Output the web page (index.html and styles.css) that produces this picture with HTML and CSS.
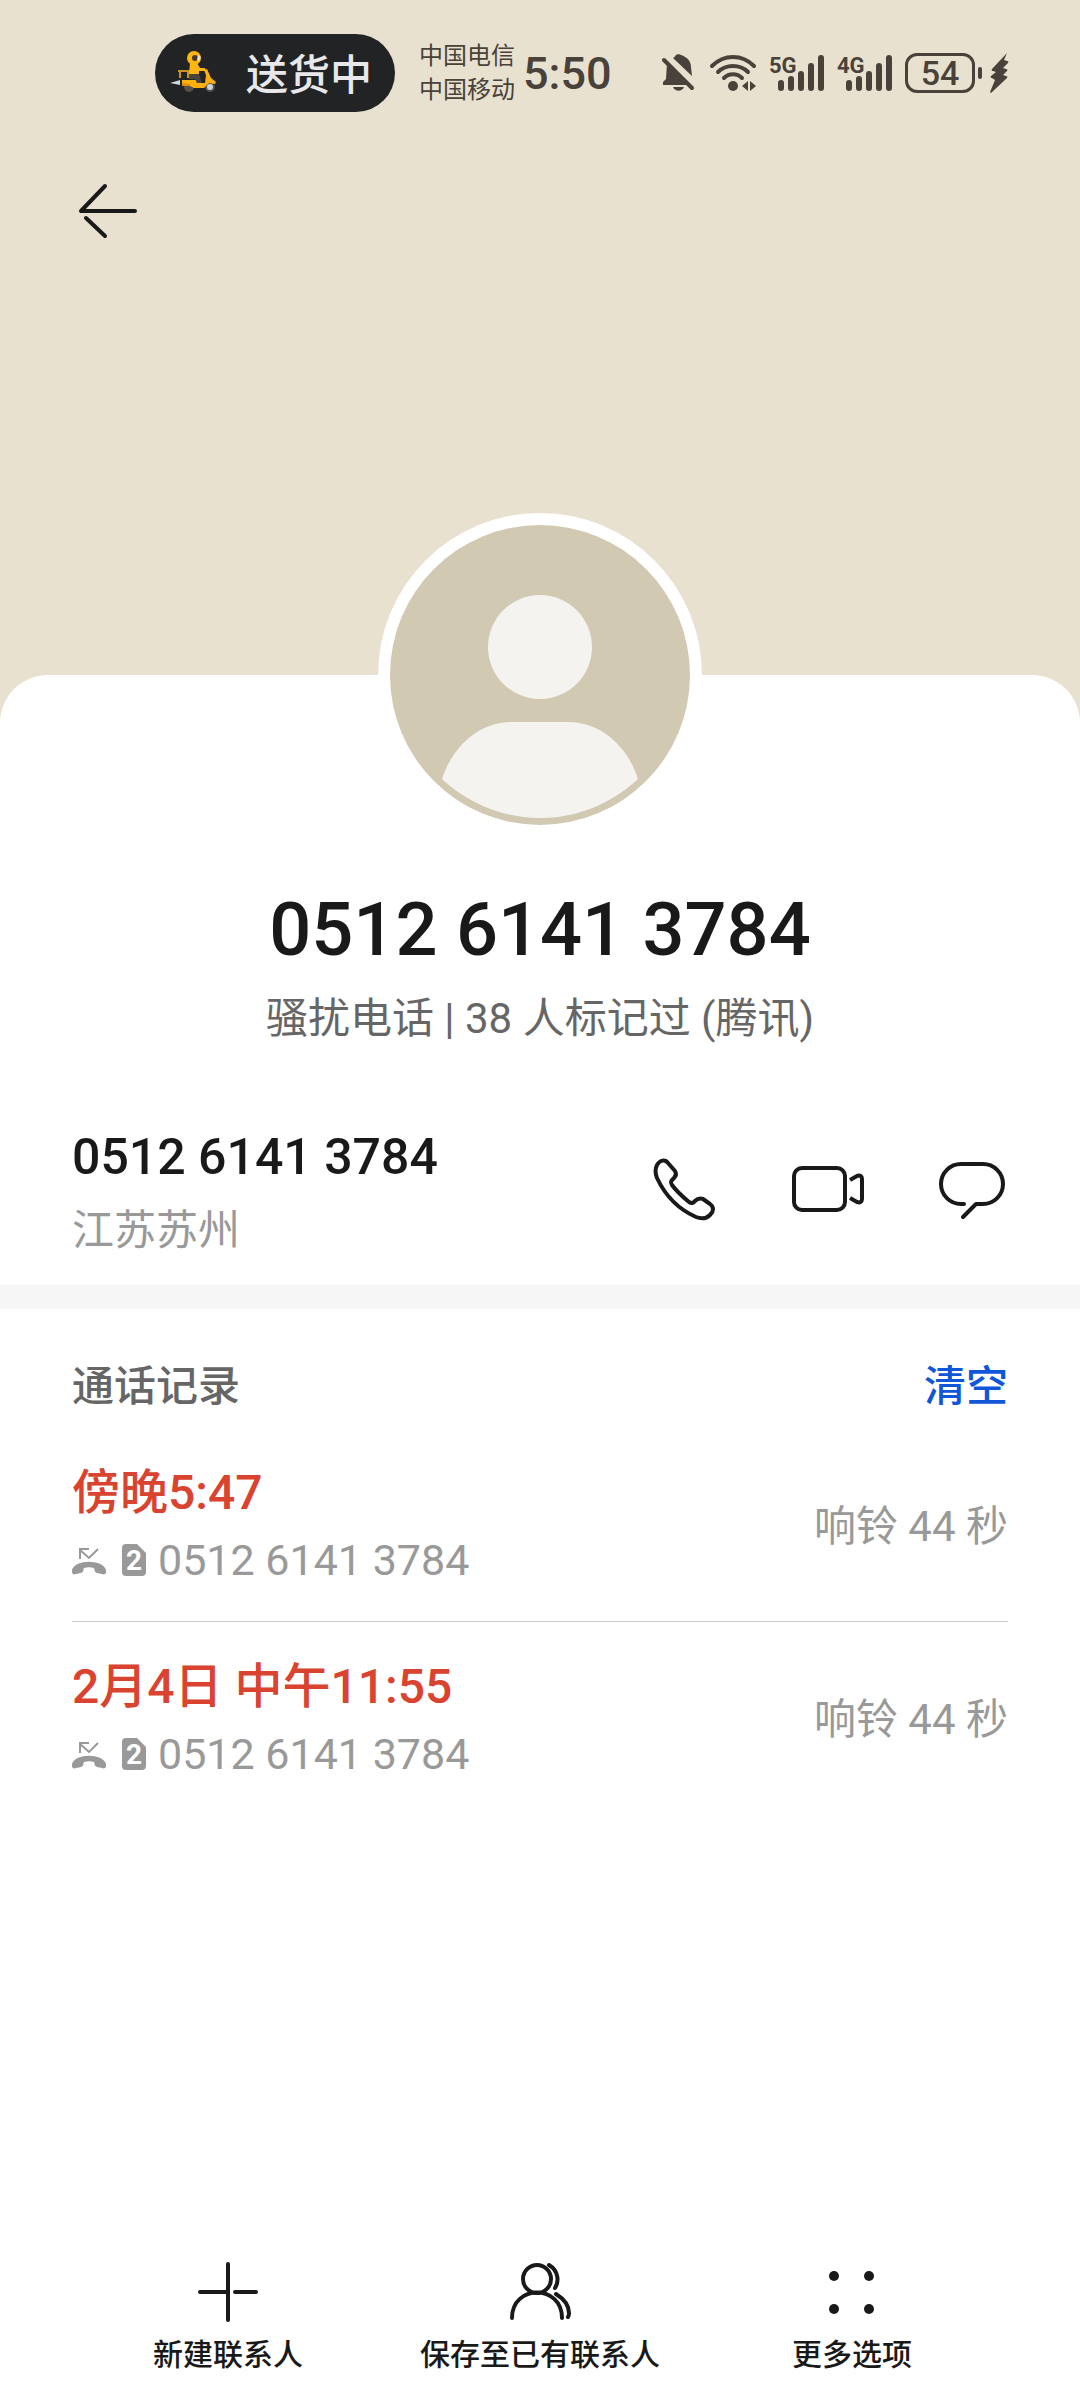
FILE: index.html
```html
<!DOCTYPE html>
<html lang="zh-CN">
<head>
<meta charset="utf-8">
<meta name="viewport" content="width=device-width, initial-scale=1">
<title>0512 6141 3784</title>
<link rel="stylesheet" href="styles.css">
</head>
<body>
<div class="page">
  <header class="hero">
    <div class="status">
      <div class="pill">
        <svg class="scooter" width="50" height="44" viewBox="0 0 50 44" aria-hidden="true">
          <path d="M8 20h12M10 20v7M18 20v7" fill="none" stroke="#c99325" stroke-width="2"/>
          <path d="M0 32l10-3v5z" fill="#cfd6e2"/>
          <circle cx="19" cy="36" r="5" fill="#55504a"/>
          <circle cx="40" cy="36" r="5" fill="#55504a"/>
          <circle cx="40" cy="36" r="3" fill="#cdd3dc"/>
          <path d="M12 29h17l2 3h4l1-8-2-5 3-1 4 9 5 4-1 2-6-1-5 5H24l-6-3h-6z" fill="#fcb010"/>
          <path d="M19 23h10l3 9h-5l-2-4h-6z" fill="#48433f"/>
          <path d="M20 12h7l3 5h5v3h-6v3h-10z" fill="#ffb70f"/>
          <circle cx="24" cy="7" r="7" fill="#ffb70f"/>
          <circle cx="25" cy="7" r="3" fill="#4c3a20"/>
          <path d="M28 4l3 2-2 4-2-1z" fill="#e9e2d8"/>
          <path d="M12 32l8 1-2 2h-6z" fill="#e68c0b"/>
        </svg>
        <span>送货中</span>
      </div>
      <div class="carriers"><span>中国电信</span><span>中国移动</span></div>
      <time class="clock">5:50</time>
      <svg class="bell" width="32" height="38" viewBox="0 0 32 38" aria-label="静音">
        <path d="M11 4C13 3 13 2 14 1c1-1 4-1 5 0 6 2 10 6 10 12l1 9z"/>
        <path d="M5 9l22 22H1v-3l3-3z"/>
        <path d="M2 6l28 28" fill="none" stroke="currentColor" stroke-width="4" stroke-linecap="round"/>
        <path d="M11 33h11c-2 5-9 5-11 0z"/>
      </svg>
      <svg class="wifi" width="48" height="38" viewBox="0 0 48 38" aria-label="无线网络">
        <g fill="none" stroke="currentColor" stroke-width="4" stroke-linecap="round">
          <path d="M3 12C15 0 33 0 45 12"/><path d="M9 18C17 10 31 10 39 18"/><path d="M15 24C20 19 28 19 33 24"/>
        </g>
        <circle cx="24" cy="32" r="5"/>
        <path d="M33 32l6-5v10zM41 27l6 5-6 5z"/>
      </svg>
      <svg class="signal" width="56" height="38" viewBox="0 0 56 38" aria-label="5G 信号">
        <text x="0" y="19">5G</text>
        <path d="M12 29v5M22 25v9M32 20v14M42 12v22M52 4v30"/>
      </svg>
      <svg class="signal" width="56" height="38" viewBox="0 0 56 38" aria-label="4G 信号">
        <text x="0" y="19">4G</text>
        <path d="M12 29v5M22 25v9M32 20v14M42 12v22M52 4v30"/>
      </svg>
      <div class="battery"><span>54</span></div>
      <svg class="bolt" width="18" height="40" viewBox="0 0 18 40" aria-label="充电中">
        <path d="M17 0L2 16q-1 2 1 2l3 1-5 4q-1 2 1 2l3 2-5 12 1 1 16-15q1-2-1-2l-3-1 4-4q1-2-1-2l-3-1 5-5q1-2-1-2l-3-1z"/>
      </svg>
    </div>
    <button class="back" aria-label="返回">
      <svg width="64" height="60" viewBox="0 0 64 60"><path d="M29 5L5 30H59M29 55L10 37" fill="none" stroke="currentColor" stroke-width="4" stroke-linecap="round" stroke-linejoin="round"/></svg>
    </button>
  </header>

  <main class="sheet">
    <svg class="avatar" width="324" height="324" viewBox="0 0 324 324" aria-hidden="true">
      <circle cx="162" cy="162" r="162" fill="#fff"/>
      <circle cx="162" cy="162" r="150" fill="#d2c9b3"/>
      <circle cx="162" cy="134" r="52" fill="#f4f3f0"/>
      <path d="M134 209h56c32 0 59 23 70 57-56 52-140 52-196 0 11-34 38-57 70-57z" fill="#f4f3f0"/>
    </svg>
    <h1 class="title">0512 6141 3784</h1>
    <p class="tag">骚扰电话 | 38 人标记过 (腾讯)</p>

    <section class="contact">
      <div class="contact-text">
        <p class="number">0512 6141 3784</p>
        <p class="region">江苏苏州</p>
      </div>
      <div class="actions">
        <button aria-label="拨打电话">
          <svg width="64" height="64" viewBox="0 0 64 64"><path d="M5 8C8 3 13 2 16 6l7 8c2 3 1 5-1 7-3 3-4 4-2 7 5 7 11 12 17 17 3 2 4 1 6-1 3-3 5-3 8-2l7 5c4 3 4 7 0 11-4 4-9 4-14 2C26 52 13 38 5 21 3 16 3 12 5 8z"/></svg>
        </button>
        <button aria-label="视频通话">
          <svg width="76" height="64" viewBox="0 0 76 64"><rect x="4" y="11" width="51" height="42" rx="8"/><path d="M60 23l7-4c3-1 5 0 5 3v20c0 3-2 4-5 3l-7-4" stroke-linecap="butt"/></svg>
        </button>
        <button aria-label="发送信息">
          <svg width="68" height="64" viewBox="2 0 68 64"><path d="M26 47H23A20 20 0 0 1 23 7H45A20 20 0 0 1 45 47H38L25 60"/></svg>
        </button>
      </div>
    </section>

    <section class="log">
      <div class="log-head"><h2>通话记录</h2><button class="clear">清空</button></div>
      <ul>
        <li>
          <div>
            <p class="when">傍晚5:47</p>
            <p class="from">
              <svg class="missed" width="34" height="32" viewBox="0 0 34 32" aria-label="未接来电"><path d="M8 15V5h9M8 6l9 8 9-9" fill="none" stroke="currentColor" stroke-width="2"/><path d="M0 26c3-11 31-11 34 0v2c0 2-2 3-4 2l-5-1c-3-1-2-3-3-5-3-1-7-1-10 0-1 2 0 4-3 5l-5 1c-2 1-4 0-4-2z"/></svg>
              <svg class="sim" width="24" height="32" viewBox="0 0 24 32" aria-label="卡2"><path d="M4 0h11l9 9v19q0 4-4 4H4q-4 0-4-4V4q0-4 4-4z"/><text x="12" y="26">2</text></svg>
              <span>0512 6141 3784</span>
            </p>
          </div>
          <span class="ring">响铃 44 秒</span>
        </li>
        <li>
          <div>
            <p class="when">2月4日 中午11:55</p>
            <p class="from">
              <svg class="missed" width="34" height="32" viewBox="0 0 34 32" aria-label="未接来电"><path d="M8 15V5h9M8 6l9 8 9-9" fill="none" stroke="currentColor" stroke-width="2"/><path d="M0 26c3-11 31-11 34 0v2c0 2-2 3-4 2l-5-1c-3-1-2-3-3-5-3-1-7-1-10 0-1 2 0 4-3 5l-5 1c-2 1-4 0-4-2z"/></svg>
              <svg class="sim" width="24" height="32" viewBox="0 0 24 32" aria-label="卡2"><path d="M4 0h11l9 9v19q0 4-4 4H4q-4 0-4-4V4q0-4 4-4z"/><text x="12" y="26">2</text></svg>
              <span>0512 6141 3784</span>
            </p>
          </div>
          <span class="ring">响铃 44 秒</span>
        </li>
      </ul>
    </section>

    <nav class="toolbar">
      <button>
        <svg width="64" height="64" viewBox="0 0 64 64"><path d="M32 4v56M4 32h28M39 32h21"/></svg>
        <span>新建联系人</span>
      </button>
      <button>
        <svg width="64" height="64" viewBox="0 0 64 64"><circle cx="29" cy="19" r="14"/><path d="M4 58C4 24 54 24 54 58"/><path d="M41 5c10 6 10 17 6 23M48 34c8 5 13 12 13 19 0 2 0 3-1 4" stroke-width="4"/></svg>
        <span>保存至已有联系人</span>
      </button>
      <button>
        <svg width="64" height="64" viewBox="0 0 64 64"><g fill="currentColor" stroke="none"><circle cx="14" cy="16" r="5"/><circle cx="49" cy="16" r="5"/><circle cx="14" cy="49" r="5"/><circle cx="49" cy="49" r="5"/></g></svg>
        <span>更多选项</span>
      </button>
    </nav>
  </main>
</div>
</body>
</html>
```
FILE: styles.css
```css
* { box-sizing: border-box; }
body, h1, h2, p, ul { margin: 0; padding: 0; }
body {
  background: #e8e1cf;
  color: #191919;
  font-family: Roboto, "Noto Sans CJK SC", sans-serif;
}
button {
  padding: 0;
  border: 0;
  background: none;
  color: inherit;
  font: inherit;
  cursor: pointer;
}
svg { display: block; flex: none; overflow: visible; }
ul { list-style: none; }

.page {
  display: flex;
  flex-direction: column;
  min-height: 100vh;
}

/* Coloured header with the status bar */
.hero {
  height: 675px;
  padding: 34px 72px 0;
}
.status {
  display: flex;
  align-items: center;
  height: 78px;
  color: #48423a;
  fill: currentColor;
}
.pill {
  display: flex;
  align-items: center;
  gap: 26px;
  width: 240px;
  height: 78px;
  margin-left: 83px;
  padding-left: 15px;
  border-radius: 39px;
  background: #222325;
  color: #e8e8ea;
  font-size: 42px;
  font-weight: 500;
  white-space: nowrap;
}
.pill span { padding-bottom: 4px; }
.carriers {
  display: flex;
  flex-direction: column;
  margin-left: 24px;
  font-size: 24px;
  line-height: 34px;
  white-space: nowrap;
}
.clock {
  margin-left: 8px;
  font-size: 45px;
  font-weight: 500;
}
.bell { margin-left: auto; }
.wifi { margin-left: 15px; }
.signal { margin-left: 12px; }
.signal path {
  fill: none;
  stroke: currentColor;
  stroke-width: 6;
  stroke-linecap: round;
}
.signal text { font-size: 22px; font-weight: 700; }
.battery {
  position: relative;
  display: grid;
  place-items: center;
  width: 70px;
  height: 40px;
  margin-left: 12px;
  border: 3px solid currentColor;
  border-radius: 12px;
  font-size: 34px;
  font-weight: 500;
  line-height: 34px;
}
.battery::after {
  content: "";
  position: absolute;
  left: 70px;
  width: 4px;
  height: 12px;
  border-radius: 2px;
  background: currentColor;
}
.bolt { margin-left: 15px; }
.back {
  display: block;
  margin: 69px 0 0 4px;
}

/* White sheet */
.sheet {
  display: flex;
  flex: 1;
  flex-direction: column;
  border-radius: 48px 48px 0 0;
  background: #fff;
}
.avatar {
  margin: -162px auto 0;
}
.title {
  margin-top: 48px;
  font-size: 74px;
  font-weight: 500;
  line-height: 90px;
  text-align: center;
}
.tag {
  margin-top: 14px;
  color: #666;
  font-size: 42px;
  line-height: 60px;
  text-align: center;
}
.contact {
  display: flex;
  align-items: center;
  justify-content: space-between;
  padding: 78px 72px 24px;
  border-bottom: 24px solid #f6f6f6;
}
.number {
  font-size: 50px;
  font-weight: 500;
  line-height: 60px;
}
.region {
  margin-top: 14px;
  color: #999;
  font-size: 42px;
  line-height: 60px;
}
.actions {
  display: flex;
  gap: 74px;
  padding-bottom: 10px;
}
.actions svg, .toolbar svg {
  fill: none;
  stroke: currentColor;
  stroke-width: 4;
  stroke-linecap: round;
  stroke-linejoin: round;
}

/* Call log */
.log {
  flex: 1;
  padding: 48px 72px 0;
}
.log-head {
  display: flex;
  justify-content: space-between;
  font-size: 42px;
  line-height: 60px;
}
.log-head h2 {
  color: #666;
  font-size: 42px;
  font-weight: 500;
}
.clear { color: #0f57d8; font-weight: 500; }
.log li {
  display: flex;
  align-items: center;
  justify-content: space-between;
  height: 193px;
  border-bottom: 1px solid #ccc;
}
.log li:last-child { border-bottom: 0; }
.log ul { margin-top: 12px; }
.when {
  color: #d9432f;
  font-size: 48px;
  font-weight: 500;
  line-height: 70px;
}
.from {
  display: flex;
  align-items: center;
  color: #999;
  fill: currentColor;
  font-size: 43px;
  line-height: 64px;
}
.missed { margin-right: 16px; }
.sim { margin-right: 12px; }
.sim text {
  fill: #fff;
  font-size: 28px;
  font-weight: 700;
  text-anchor: middle;
}
.ring {
  padding-bottom: 6px;
  color: #999;
  font-size: 42px;
}

/* Bottom toolbar */
.toolbar {
  display: grid;
  grid-template-columns: repeat(3, 1fr);
  padding: 0 72px 24px;
}
.toolbar button {
  display: flex;
  flex-direction: column;
  align-items: center;
  gap: 10px;
  font-size: 30px;
  font-weight: 500;
  line-height: 42px;
  white-space: nowrap;
}
```
